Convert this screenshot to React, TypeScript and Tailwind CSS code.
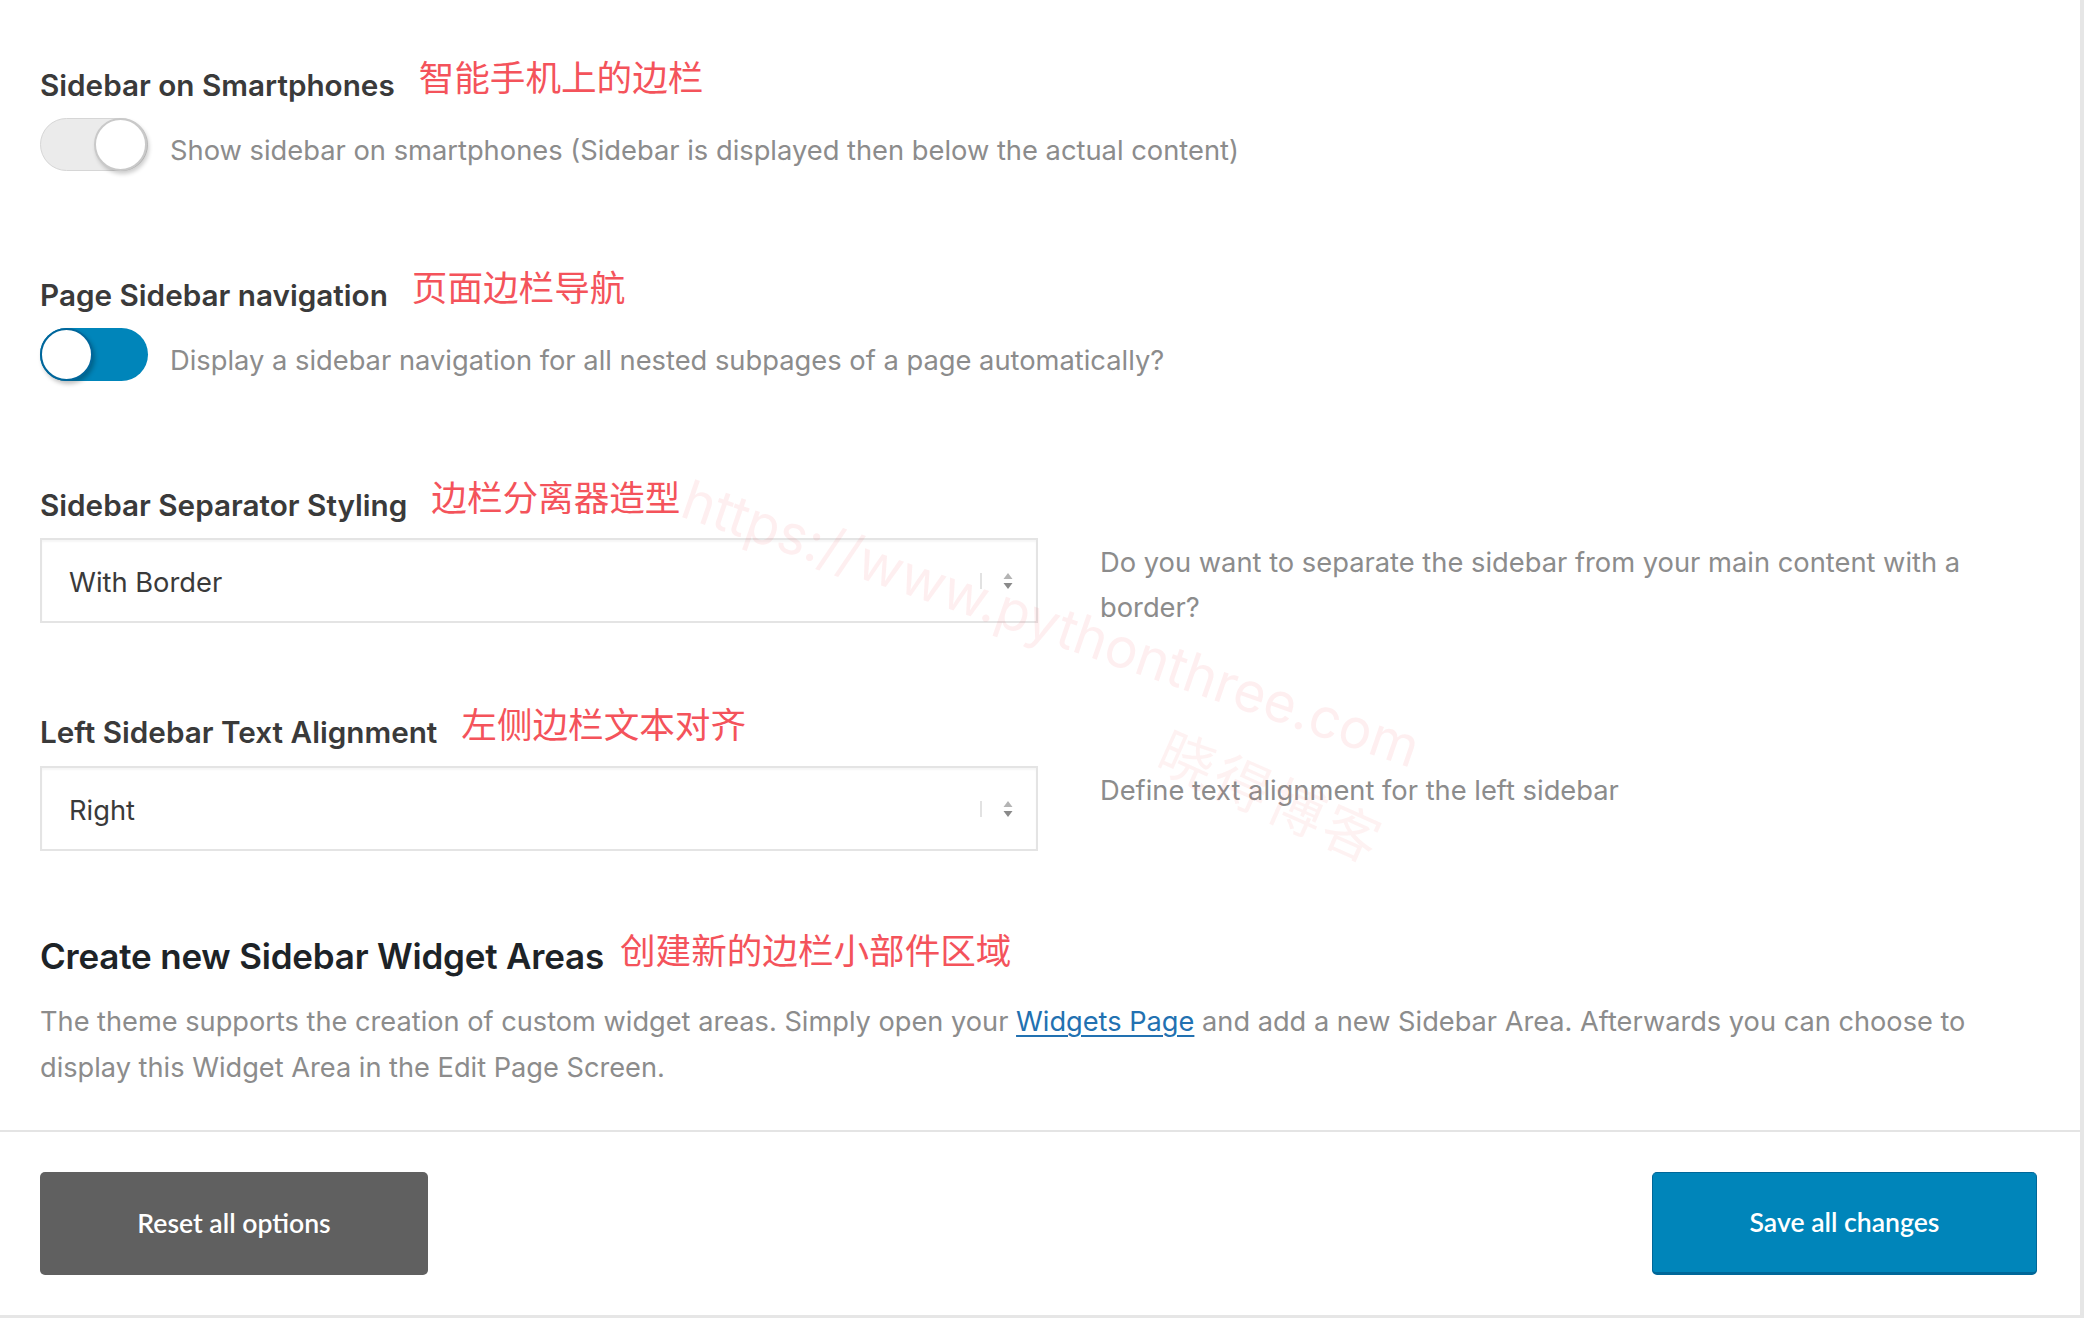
import React from "react";

const SANS = "font-['Inter','Noto_Sans_CJK_SC',sans-serif]";
const CJK = "font-['Noto_Sans_CJK_SC',sans-serif]";

function Toggle({ on }: { on: boolean }) {
  if (on) {
    return (
      <div className="flex h-[53px] w-[108px] shrink-0 items-center justify-start rounded-full bg-[#0085ba]">
        <span className="h-[53px] w-[53px] rounded-full border-2 border-[#00669b] bg-white shadow-[2px_3px_4px_rgba(0,0,0,0.25)]" />
      </div>
    );
  }
  return (
    <div className="flex h-[53px] w-[108px] shrink-0 items-center justify-end rounded-full border border-[#d6d6d6] bg-[#ebebeb]">
      <span className="h-[53px] w-[53px] rounded-full border-2 border-[#c9c9c9] bg-white shadow-[2px_3px_4px_rgba(0,0,0,0.2)]" />
    </div>
  );
}

function Heading({ title, note, big }: { title: string; note: string; big?: boolean }) {
  return (
    <div className="flex h-[40px] -translate-y-[4px] items-baseline">
      <h3
        className={
          big
            ? "text-[35px] font-semibold leading-[40px] tracking-[-0.2px] text-[#1d2327]"
            : "text-[29.7px] font-semibold leading-[40px] text-[#3a3a3a]"
        }
      >
        {title}
      </h3>
      <span
        className={`${CJK} ${big ? "ml-[16px]" : "ml-[24px]"} -translate-y-[5px] text-[35.6px] leading-[40px] text-[#f4535b]`}
      >
        {note}
      </span>
    </div>
  );
}

function SelectBox({ value }: { value: string }) {
  return (
    <div className="flex h-[85px] w-[998px] shrink-0 items-center border-2 border-[#e4e4e4] bg-white pl-[27px] pr-[22px] shadow-[inset_0_2px_2px_rgba(0,0,0,0.04)]">
      <span className="flex-1 translate-y-[3px] text-[27.3px] text-[#3a3a3a]">{value}</span>
      <span className="h-[16px] w-[2px] bg-[#e2e2e2]" />
      <svg className="ml-[20px] h-[18px] w-[12px]" viewBox="0 0 12 18">
        <path d="M6 1 L10.5 7 L1.5 7 Z" fill="#b4b4b4" />
        <path d="M6 17 L10.5 11 L1.5 11 Z" fill="#8a8a8a" />
      </svg>
    </div>
  );
}

export default function App() {
  return (
    <div className={`${SANS} relative h-[1318px] w-full overflow-hidden bg-white`}>
      <div className="flex h-full flex-col border-b-[3px] border-r-4 border-[#e6e6e6]">
        <div className="pl-10 pr-[43px] pt-[65px]">
          {/* Sidebar on smartphones */}
          <Heading title="Sidebar on Smartphones" note="智能手机上的边栏" />
          <div className="mt-[13px] flex items-center gap-[22px]">
            <Toggle on={false} />
            <p className="translate-y-[7px] text-[27.3px] text-[#8c8c8c]">
              Show sidebar on smartphones (Sidebar is displayed then below the actual content)
            </p>
          </div>

          {/* Page sidebar navigation */}
          <div className="mt-[104px]">
            <Heading title="Page Sidebar navigation" note="页面边栏导航" />
            <div className="mt-[13px] flex items-center gap-[22px]">
              <Toggle on={true} />
              <p className="translate-y-[7px] text-[27.3px] text-[#8c8c8c]">
                Display a sidebar navigation for all nested subpages of a page automatically?
              </p>
            </div>
          </div>

          {/* Separator styling */}
          <div className="mt-[104px]">
            <Heading title="Sidebar Separator Styling" note="边栏分离器造型" />
            <div className="mt-[13px] flex items-start gap-[62px]">
              <SelectBox value="With Border" />
              <p className="flex-1 translate-y-[2px] text-[27.3px] leading-[45px] text-[#8c8c8c]">
                Do you want to separate the sidebar from your main content with a border?
              </p>
            </div>
          </div>

          {/* Text alignment */}
          <div className="mt-[84px]">
            <Heading title="Left Sidebar Text Alignment" note="左侧边栏文本对齐" />
            <div className="mt-[14px] flex items-start gap-[62px]">
              <SelectBox value="Right" />
              <p className="flex-1 translate-y-[2px] text-[27.3px] leading-[45px] text-[#8c8c8c]">
                Define text alignment for the left sidebar
              </p>
            </div>
          </div>

          {/* Widget areas */}
          <div className="mt-[87px]">
            <Heading big title="Create new Sidebar Widget Areas" note="创建新的边栏小部件区域" />
            <p className="mt-[21px] text-[27.2px] leading-[46px] text-[#8c8c8c]">
              The theme supports the creation of custom widget areas. Simply open your{" "}
              <a href="#" className="text-[#2271b1] underline decoration-2 underline-offset-4">
                Widgets Page
              </a>{" "}
              and add a new Sidebar Area. Afterwards you can choose to display this Widget Area in the Edit Page Screen.
            </p>
          </div>
        </div>

        <div className="mt-[39px] border-t-2 border-[#e4e4e4]" />

        <div className="flex items-start justify-between pl-10 pr-[43px] pt-[40px]">
          <button className="flex h-[103px] w-[388px] items-center justify-center rounded-[5px] bg-[#606060] font-['Lato',sans-serif] text-[26.6px] font-semibold text-white">
            Reset all options
          </button>
          <button className="flex h-[103px] w-[385px] items-center justify-center rounded-[5px] border border-b-[3px] border-[#006799] bg-[#0085ba] font-['Lato',sans-serif] text-[26.6px] font-semibold text-white">
            Save all changes
          </button>
        </div>
      </div>

      {/* watermark */}
      <div className="pointer-events-none absolute left-[698px] top-[458px] origin-top-left rotate-[19deg] whitespace-nowrap text-[55px] text-[rgba(244,83,91,0.09)]">
        https://www.pythonthree.com
      </div>
      <div
        className={`${CJK} pointer-events-none absolute left-[1180px] top-[707px] origin-top-left rotate-[24deg] whitespace-nowrap text-[56px] tracking-[4px] text-[rgba(244,83,91,0.08)]`}
      >
        晓得博客
      </div>
    </div>
  );
}
